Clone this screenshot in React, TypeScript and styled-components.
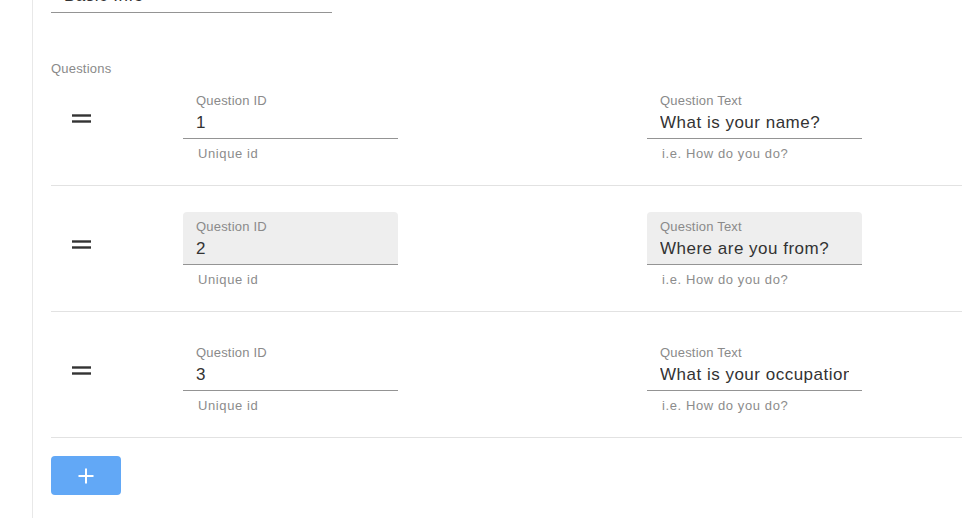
import React from "react";
import styled, { createGlobalStyle } from "styled-components";

const GlobalStyle = createGlobalStyle`
  html, body {
    margin: 0;
    padding: 0;
    background: #ffffff;
    overflow: hidden;
  }
  body {
    font-family: "Liberation Sans", Arial, Helvetica, sans-serif;
  }
`;

const Page = styled.div`
  display: flex;
  height: 518px;
  width: 1200px;
`;

const Sidebar = styled.div`
  width: 32px;
  flex-shrink: 0;
  border-right: 1px solid #e8e8e8;
`;

const Main = styled.div`
  flex: 1;
  padding-left: 18px;
  display: flex;
  flex-direction: column;
`;

const Field = styled.div<{ $width: number; $filled?: boolean }>`
  width: ${(p) => p.$width}px;
  height: 53px;
  box-sizing: border-box;
  padding: 7px 13px 0 13px;
  border-bottom: 1px solid #949494;
  border-radius: 4px 4px 0 0;
  background: ${(p) => (p.$filled ? "#eeeeee" : "transparent")};
  display: flex;
  flex-direction: column;
  gap: 4px;
  overflow: hidden;
`;

const TopField = styled(Field)`
  margin-top: -40px;
  padding-top: 26px;
`;

const Label = styled.div`
  font-size: 13px;
  line-height: 16px;
  letter-spacing: 0.2px;
  color: #8a8a8a;
  white-space: nowrap;
`;

const Value = styled.div`
  font-size: 17px;
  line-height: 20px;
  letter-spacing: 0.5px;
  color: #333333;
  white-space: nowrap;
  overflow: hidden;
`;

const Helper = styled.div`
  margin-top: 7px;
  padding-left: 15px;
  font-size: 13px;
  line-height: 16px;
  letter-spacing: 0.6px;
  color: #8c8c8c;
`;

const SectionLabel = styled.div`
  margin-top: 48px;
  font-size: 13px;
  line-height: 16px;
  letter-spacing: 0.2px;
  color: #8a8a8a;
`;

const Row = styled.div`
  display: grid;
  grid-template-columns: 132px 464px 464px;
  padding: 9px 0 23px;
  border-bottom: 1px solid #e2e2e2;

  & + & {
    padding-top: 26px;
  }
`;

const Handle = styled.div`
  padding: 28px 0 0 21px;
  color: #333333;

  svg {
    display: block;
  }
`;

const Cell = styled.div`
  display: flex;
  flex-direction: column;
`;

const AddButton = styled.button`
  margin-top: 18px;
  width: 70px;
  height: 39px;
  border: none;
  border-radius: 4px;
  background: #62a8f6;
  display: flex;
  align-items: center;
  justify-content: center;
  padding: 0;
  cursor: pointer;
`;

const DragIcon = () => (
  <svg width="19" height="9" viewBox="0 0 19 9">
    <rect x="0" y="0.3" width="19" height="2.4" fill="currentColor" />
    <rect x="0" y="6.3" width="19" height="2.4" fill="currentColor" />
  </svg>
);

const PlusIcon = () => (
  <svg width="16" height="16" viewBox="0 0 16 16">
    <path d="M8 0.5v15M0.5 8h15" stroke="#ffffff" strokeWidth="2" fill="none" />
  </svg>
);

const questions = [
  { id: "1", text: "What is your name?", filled: false },
  { id: "2", text: "Where are you from?", filled: true },
  { id: "3", text: "What is your occupation?", filled: false },
];

const App: React.FC = () => (
  <>
    <GlobalStyle />
    <Page>
      <Sidebar />
      <Main>
        <TopField $width={281}>
          <Value>Basic Info</Value>
        </TopField>
        <SectionLabel>Questions</SectionLabel>
        {questions.map((q) => (
          <Row key={q.id}>
            <Handle>
              <DragIcon />
            </Handle>
            <Cell>
              <Field $width={215} $filled={q.filled}>
                <Label>Question ID</Label>
                <Value>{q.id}</Value>
              </Field>
              <Helper>Unique id</Helper>
            </Cell>
            <Cell>
              <Field $width={215} $filled={q.filled}>
                <Label>Question Text</Label>
                <Value>{q.text}</Value>
              </Field>
              <Helper>i.e. How do you do?</Helper>
            </Cell>
          </Row>
        ))}
        <AddButton>
          <PlusIcon />
        </AddButton>
      </Main>
    </Page>
  </>
);

export default App;
